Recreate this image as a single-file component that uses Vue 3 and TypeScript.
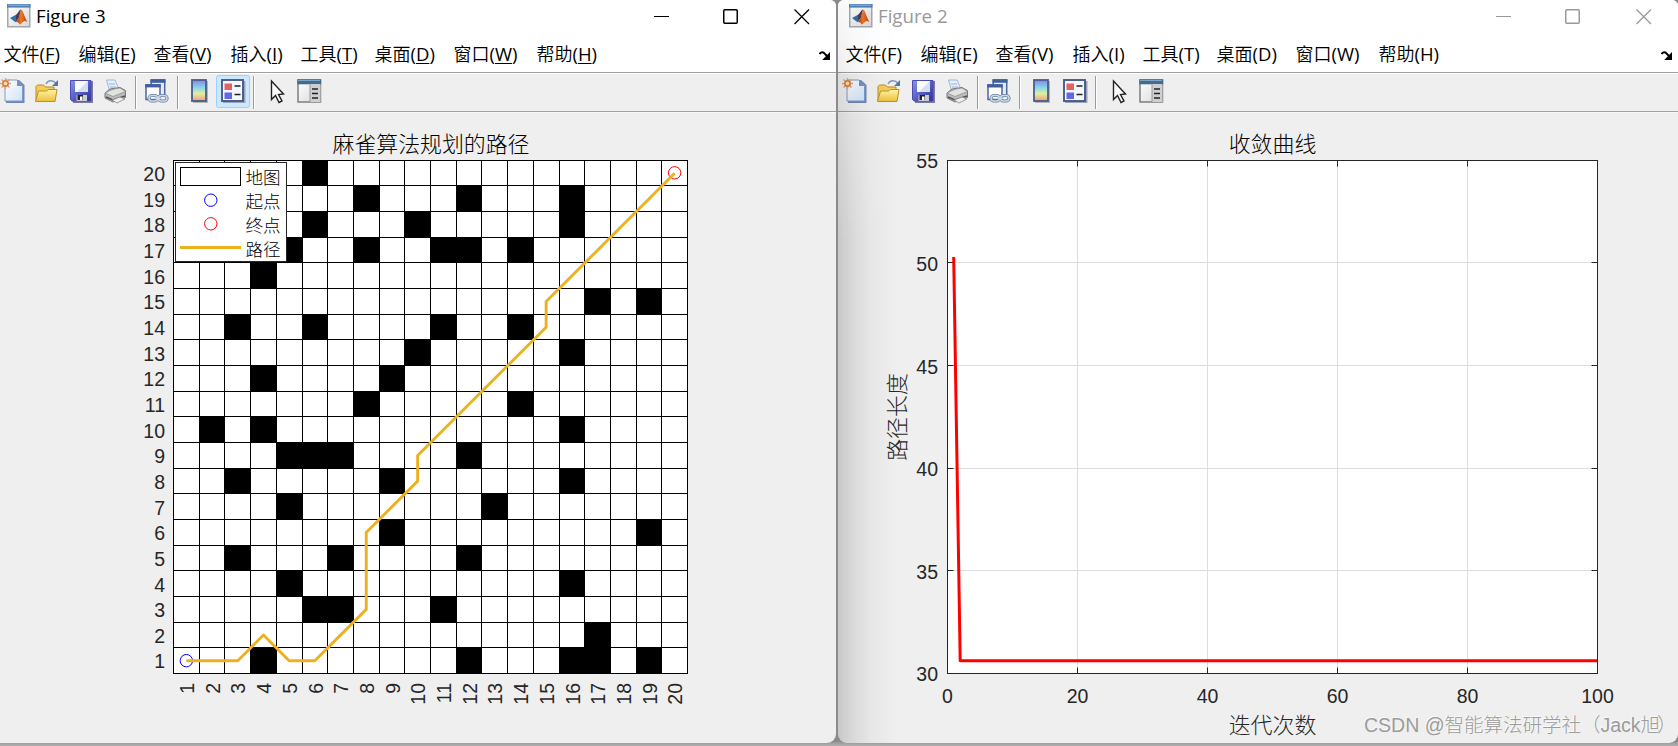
<script setup lang="ts">
interface FigureWindow {
  id: number
  title: string
  active: boolean
}
interface MenuEntry {
  label: string
  key: string
  width: number
}

const windows: FigureWindow[] = [
  { id: 3, title: 'Figure 3', active: true },
  { id: 2, title: 'Figure 2', active: false },
]

const menus: MenuEntry[] = [
  { label: '文件', key: 'F', width: 75 },
  { label: '编辑', key: 'E', width: 75 },
  { label: '查看', key: 'V', width: 77 },
  { label: '插入', key: 'I', width: 70 },
  { label: '工具', key: 'T', width: 74 },
  { label: '桌面', key: 'D', width: 79 },
  { label: '窗口', key: 'W', width: 83 },
  { label: '帮助', key: 'H', width: 70 },
]

const obstacles: Record<number, number[]> = {
  20: [6],
  19: [8, 12, 16],
  18: [6, 10, 16],
  17: [5, 8, 11, 12, 14],
  16: [4],
  15: [17, 19],
  14: [3, 6, 11, 14],
  13: [10, 16],
  12: [4, 9],
  11: [8, 14],
  10: [2, 4, 16],
  9: [5, 6, 7, 12],
  8: [3, 9, 16],
  7: [5, 13],
  6: [9, 19],
  5: [3, 7, 12],
  4: [5, 16],
  3: [6, 7, 11],
  2: [17],
  1: [4, 12, 16, 17, 19],
}

const edgeX = (i: number): number => Math.round(173 + i * 25.7) + 0.5
const edgeY = (i: number): number => Math.floor(673.3 - i * 25.65) + 0.5
const midX = (v: number): number => 173.5 + (v - 0.5) * 25.7
const midY = (v: number): number => 673.5 - (v - 0.5) * 25.65

const cells = Object.entries(obstacles).flatMap(([row, cols]) =>
  cols.map((c) => {
    const r = Number(row)
    return { x: edgeX(c - 1), y: edgeY(r), w: edgeX(c) - edgeX(c - 1), h: edgeY(r - 1) - edgeY(r) }
  }),
)
const lines = Array.from({ length: 21 }, (_, i) => i)
const ticks = Array.from({ length: 20 }, (_, i) => i + 1)

const route: [number, number][] = [
  [1, 1], [3, 1], [4, 2], [5, 1], [6, 1], [8, 3], [8, 6], [10, 8], [10, 9], [15, 14], [15, 15], [20, 20],
]
const routePoints = route.map(([x, y]) => `${midX(x)},${midY(y)}`).join(' ')

const curveX = (v: number): number => 105.5 + v * 6.5
const curveY = (v: number): number => 673.5 - (v - 30) * 20.52
const snap = (v: number): number => Math.floor(v - 0.2) + 0.5
const curve: [number, number][] = [[1, 50.3], [2, 30.62], [100, 30.62]]
const curvePoints = curve.map(([x, y]) => `${curveX(x) - 0.3},${curveY(y)}`).join(' ')
const xTicks = [0, 20, 40, 60, 80, 100]
const yTicks = [30, 35, 40, 45, 50, 55]
</script>

<template>
  <div class="desktop">
    <svg width="0" height="0" class="defs">
      <defs>
        <linearGradient id="jet" x1="0" y1="0" x2="0" y2="1">
          <stop offset="0" stop-color="#8f7fe6" /><stop offset=".35" stop-color="#82d6ee" />
          <stop offset=".65" stop-color="#e2ef9a" /><stop offset="1" stop-color="#f49a83" />
        </linearGradient>
        <linearGradient id="paper" x1="0" y1="0" x2="1" y2="1">
          <stop offset="0" stop-color="#fff" /><stop offset="1" stop-color="#cfe2f7" />
        </linearGradient>
        <linearGradient id="gold" x1="0" y1="0" x2="0" y2="1">
          <stop offset="0" stop-color="#fff5a8" /><stop offset="1" stop-color="#eebf38" />
        </linearGradient>
        <linearGradient id="disk" x1="0" y1="0" x2="1" y2="1">
          <stop offset="0" stop-color="#8296f2" /><stop offset="1" stop-color="#2c2c94" />
        </linearGradient>
        <linearGradient id="flame" x1="0" y1="0" x2="1" y2="0">
          <stop offset="0" stop-color="#a02018" /><stop offset=".45" stop-color="#ef7a20" /><stop offset="1" stop-color="#b83a12" />
        </linearGradient>
        <linearGradient id="pane" x1="0" y1="0" x2="1" y2="1">
          <stop offset="0" stop-color="#fff" /><stop offset="1" stop-color="#d8d8d8" />
        </linearGradient>
      </defs>
    </svg>

    <section v-for="w in windows" :key="w.id" class="window" :class="{ inactive: !w.active }">
      <header class="titlebar">
        <svg class="logo" width="24" height="24" viewBox="0 0 24 24">
          <rect x=".75" y=".75" width="22" height="22" fill="url(#pane)" stroke="#a2a8ae" stroke-width="1.5" />
          <rect x="0" y="0" width="23.5" height="3.6" fill="#4d83b5" /><path d="M1 1.2h21" stroke="#8fb6d8" />
          <path d="M3 14l6-3.200 3 2.200-3.500 5.200z" fill="#2d6fb0" />
          <path d="M9 10.800c2-1 3-5 5-5.300l-2 8-3 4z" fill="#4b3b52" />
          <path d="M8.500 18.200c3-1 3.500-7 6-12.700 2 2 3.500 9 6 12.500-2-.8-3-1.600-4.500 0-1.500 1.600-2.500 2.500-3.500 2.500-1-2.300-2-2.700-4-2.300z" fill="url(#flame)" />
        </svg>
        <span class="caption">{{ w.title }}</span>
        <span class="controls">
          <svg width="156" height="16" viewBox="0 0 156 16" fill="none" stroke="currentColor">
            <path d="M0 7.500h15" />
            <rect x="69.750" y=".750" width="13.500" height="13.500" rx="1" stroke-width="1.500" />
            <path d="M140.500.5l14.500 14.500M155 .5l-14.500 14.500" stroke-width="1.300" />
          </svg>
        </span>
      </header>

      <nav class="menubar">
        <span v-for="m in menus" :key="m.key" class="menu" :style="{ width: m.width + 'px' }"
          >{{ m.label }}<span class="latin">(<span class="key">{{ m.key }}</span>)</span></span
        >
        <svg class="dock" width="12" height="10" viewBox="0 0 12 10">
          <path d="M.5 3C2.500.3 4.500 1 6 3l2 2" fill="none" stroke="#000" stroke-width="2" />
          <path d="M11 1v8H3.200z" fill="#000" />
        </svg>
      </nav>

      <div class="toolbar">
        <svg width="330" height="38" viewBox="0 74 330 38">
          <!-- new -->
          <path d="M6 80h13l5.500 5v18H6z" fill="#6f87b5" /><path d="M5 80h12l5.500 5.500V101H5z" fill="url(#paper)" stroke="#7e9aca" />
          <path d="M17 80v6h6z" fill="#7690c2" />
          <path d="M1.500 79.500l8 8M9.500 79.500l-8 8M5.500 78v11M0 83.500h11" stroke="#eba070" stroke-width="1.500" />
          <circle cx="5.500" cy="83.500" r="2.700" fill="#ffe0a0" stroke="#d66b35" stroke-width="1.300" />
          <!-- open -->
          <path d="M36 101V86.500l1.500-1.500h6l2 2H54v14z" fill="#f3cf58" stroke="#b98b22" />
          <path d="M35.500 101.500l3-10.500h8l2-1.500H57l-2 12z" fill="url(#gold)" stroke="#bd9024" />
          <path d="M46 84c2-4 7-4.500 10-.5" fill="none" stroke="#7f9cba" stroke-width="1.600" /><path d="M58 80v6h-6z" fill="#54789d" />
          <!-- save -->
          <path d="M72 81h21v22H73z" fill="#7a7aa8" /><path d="M70.500 80.500h20.500v20.500H72l-1.500-1.500z" fill="url(#disk)" stroke="#4a4ab0" />
          <path d="M75 81h13v11H75z" fill="#f8faff" /><path d="M88 81v11H77z" fill="#d3ddf4" />
          <path d="M76.500 95h10.500v6H76.500z" fill="#c9cad6" /><path d="M77.500 95h5.500v5h-5.500z" fill="#222" /><path d="M80 96.500h2.500v3.500H80z" fill="#fff" />
          <!-- print -->
          <path d="M106.500 80h8.500l4 9-9 3z" fill="#e5efff" stroke="#9fb5d6" /><path d="M109 84h6M110 87h6" stroke="#9ab0d0" />
          <path d="M105 93l5-4 10-1.500 5.500 3v7L113 102l-8-4z" fill="#bcbcbc" stroke="#777" />
          <path d="M105 93l8 3.500 12.500-5-5.500-3.500-6 1-4 1.500z" fill="#e2e2de" stroke="#888" stroke-width=".7" />
          <path d="M106 97l7 3 12-4" fill="none" stroke="#555" stroke-width="1.400" /><path d="M112 100l8-3 5 2-8 4z" fill="#eee" stroke="#888" stroke-width=".8" />
          <!-- separators -->
          <path d="M135.500 76v33M177.500 76v33M253.500 76v33" stroke="#9a9a9a" />
          <path d="M136.500 76v33M178.500 76v33M254.500 76v33" stroke="#fff" />
          <!-- link plot -->
          <rect x="151.200" y="80" width="13.500" height="15" fill="#e4ecf8" stroke="#4a659f" stroke-width="1.500" />
          <path d="M150.500 79.200H165.500v3.600H150.500z" fill="#3f5f9f" />
          <rect x="146" y="85" width="14" height="14.500" fill="#fff" stroke="#4a659f" stroke-width="1.500" />
          <path d="M145.200 84.200h15.500v3.200h-15.500z" fill="#3f5f9f" />
          <g fill="none" stroke="#677f9e" stroke-width="3.200"><rect x="149" y="95.500" width="8.500" height="5.500" rx="2.750" /><rect x="158.500" y="95.500" width="8.500" height="5.500" rx="2.750" /></g>
          <g fill="none" stroke="#cbdaea" stroke-width="1.500"><rect x="149" y="95.500" width="8.500" height="5.500" rx="2.750" /><rect x="158.500" y="95.500" width="8.500" height="5.500" rx="2.750" /><path d="M154.500 98.300h7.500" /></g>
          <!-- colour bar -->
          <path d="M193 81h15v22h-15z" fill="#b5b5b5" /><rect x="192" y="80" width="14" height="21" fill="url(#jet)" stroke="#485d8c" stroke-width="1.800" />
          <!-- legend toggle -->
          <rect v-if="w.active" x="216.500" y="75.500" width="33" height="32" rx="2" fill="#cce8ff" stroke="#99d1ff" />
          <path d="M223 81h22.500v22H223z" fill="#9aa5b8" /><rect x="222" y="80" width="21" height="21" fill="#f3f7ff" stroke="#465b88" stroke-width="1.900" />
          <path d="M224.500 83.500h7.500v6.500h-7.500z" fill="#e46263" /><path d="M224.500 92.500h7.500V99h-7.500z" fill="#6765e3" />
          <path d="M234.500 86h6M234.500 94.500h6" stroke="#222" stroke-width="1.500" />
          <!-- pointer -->
          <path d="M271.500 81v18.500l4-4 3.500 7 3-1.500-3.500-6.500 5-.5z" fill="#fff" stroke="#222" stroke-width="1.400" />
          <!-- property inspector -->
          <rect x="298" y="80" width="22.500" height="22" fill="url(#pane)" stroke="#777" stroke-width="1.400" />
          <path d="M297.300 79.300h23.900v5h-23.900z" fill="#426c94" /><path d="M298 80.500h22" stroke="#7fa5c5" />
          <path d="M310 84.300h10.500V102H310z" fill="#cfcfcf" /><path d="M310 84.500V102" stroke="#999" />
          <path d="M312 89h6M312 93.500h6M312 98h6" stroke="#222" stroke-width="1.500" />
        </svg>
      </div>

      <!-- path planning map -->
      <svg v-if="w.id === 3" class="figure" width="836" height="630" viewBox="0 113 836 630">
        <text class="cjk black" x="431" y="151.500" text-anchor="middle" font-size="21.900">麻雀算法规划的路径</text>
        <rect x="173.500" y="160.500" width="514" height="513" fill="#fff" />
        <g shape-rendering="crispEdges">
          <rect v-for="(c, i) in cells" :key="i" :x="c.x" :y="c.y" :width="c.w" :height="c.h" fill="#000" />
          <g stroke="#000">
            <line v-for="i in lines" :key="'v' + i" :x1="edgeX(i)" :x2="edgeX(i)" y1="160" y2="674" />
            <line v-for="i in lines" :key="'h' + i" x1="173" x2="688" :y1="edgeY(i)" :y2="edgeY(i)" />
          </g>
        </g>
        <g class="tick">
          <text v-for="t in ticks" :key="'y' + t" x="165" :y="midY(t) + 7.800" text-anchor="end">{{ t }}</text>
          <text v-for="t in ticks" :key="'x' + t" text-anchor="end" :transform="`translate(${midX(t) + 7.700} 683) rotate(-90)`">{{ t }}</text>
        </g>
        <circle :cx="midX(1)" :cy="midY(1)" r="6.200" fill="none" stroke="#00f" />
        <circle :cx="midX(20)" :cy="midY(20) - 0.500" r="6.200" fill="none" stroke="#f00" />
        <polyline :points="routePoints" fill="none" stroke="#edb120" stroke-width="2.900" stroke-linejoin="round" />
        <rect x="175.500" y="162.500" width="111" height="99" fill="#fff" stroke="#262626" />
        <rect x="180.500" y="167.500" width="60" height="18" fill="#fff" stroke="#000" />
        <circle cx="210.800" cy="200.200" r="6.200" fill="none" stroke="#00f" />
        <circle cx="210.800" cy="223.800" r="6.200" fill="none" stroke="#f00" />
        <path d="M180 247.500h61" stroke="#edb120" stroke-width="3" />
        <g class="cjk black" font-size="17.600">
          <text x="245.500" y="184">地图</text><text x="245.500" y="208">起点</text>
          <text x="245.500" y="232">终点</text><text x="245.500" y="256">路径</text>
        </g>
      </svg>

      <!-- convergence curve -->
      <svg v-else class="figure" width="836" height="630" viewBox="0 113 836 630">
        <text class="cjk black" x="430.500" y="151.500" text-anchor="middle" font-size="21.900">收敛曲线</text>
        <rect x="105.500" y="160.500" width="650" height="513" fill="#fff" />
        <g stroke="#dedede">
          <line v-for="t in xTicks.slice(1, 5)" :key="'v' + t" :x1="curveX(t)" :x2="curveX(t)" y1="161" y2="673" />
          <line v-for="t in yTicks.slice(1, 5)" :key="'h' + t" x1="106" x2="755" :y1="snap(curveY(t))" :y2="snap(curveY(t))" />
        </g>
        <g stroke="#262626" fill="none">
          <rect x="105.500" y="160.500" width="650" height="513" />
          <path v-for="t in xTicks.slice(1, 5)" :key="'a' + t" :d="`M${curveX(t)} 161v5.500M${curveX(t)} 673v-5.500`" />
          <path v-for="t in yTicks.slice(1, 5)" :key="'b' + t" :d="`M106 ${snap(curveY(t))}h5.500M755 ${snap(curveY(t))}h-5.500`" />
        </g>
        <polyline :points="curvePoints" fill="none" stroke="#f00" stroke-width="3" stroke-linejoin="round" />
        <g class="tick">
          <text v-for="t in yTicks" :key="'y' + t" x="96" :y="curveY(t) + 7.800" text-anchor="end">{{ t }}</text>
          <text v-for="t in xTicks" :key="'x' + t" :x="curveX(t)" y="703" text-anchor="middle">{{ t }}</text>
        </g>
        <text class="cjk" x="430.500" y="733" text-anchor="middle" font-size="21.900">迭代次数</text>
        <text class="cjk" text-anchor="middle" font-size="21.900" transform="translate(62.800 417) rotate(-90)">路径长度</text>
      </svg>
    </section>
    <div class="watermark">CSDN @智能算法研学社<span class="paren">（</span>Jack旭<span class="paren">）</span></div>
  </div>
</template>

<style>
html,
body {
  margin: 0;
  overflow: hidden;
}
</style>

<style scoped>
.desktop {
  position: relative;
  display: flex;
  gap: 2px;
  width: 1678px;
  height: 746px;
  overflow: hidden;
  background: linear-gradient(#8b8b8b 742px, #979797 742px, #b0b0b0 746px);
}
.defs {
  position: absolute;
}
.window {
  position: relative;
  display: flex;
  flex-direction: column;
  flex: none;
  box-sizing: border-box;
  width: 836px;
  height: 743px;
  overflow: hidden;
  background: #efefef;
  border-radius: 0 6px 9px 0;
}
.window.inactive {
  width: 840px;
  padding-left: 4px;
  border-radius: 6px 6px 9px 9px;
  background: linear-gradient(#fff 72px, #a0a0a0 72px, #a0a0a0 73px, #fff 73px, #efefef 74px, #efefef 111px, #a0a0a0 111px, #a0a0a0 112px, #fafafa 112px, #efefef 113px);
}
/* soft shadow cast by the neighbouring window */
.window.inactive::after {
  content: '';
  position: absolute;
  left: 0;
  top: 0;
  width: 60px;
  height: 100%;
  pointer-events: none;
  background: linear-gradient(90deg, rgba(0, 0, 0, 0.16), rgba(0, 0, 0, 0.09) 25%, rgba(0, 0, 0, 0.03) 55%, transparent);
  mask-image: linear-gradient(rgba(0, 0, 0, 0.15), rgba(0, 0, 0, 0.6) 110px, #000 240px);
}
.titlebar {
  display: flex;
  flex: none;
  align-items: center;
  height: 34px;
  padding: 0 26px 0 7px;
  background: #fff;
  color: #000;
}
.inactive .titlebar,
.inactive .menubar {
  margin-left: -4px;
}
.inactive .titlebar {
  padding-left: 11px;
  color: #999;
}
.logo {
  margin-top: -2px;
}
.caption {
  margin-left: 5px;
  margin-top: -2px;
  font: 18.7px/34px 'Open Sans', sans-serif;
  white-space: nowrap;
}
.controls {
  display: flex;
  margin-left: auto;
  margin-top: -1px;
}
.menubar {
  display: flex;
  flex: none;
  align-items: center;
  height: 38px;
  padding-left: 3.5px;
  background: #fff;
}
.inactive .menubar {
  padding-left: 7.5px;
}
.menu {
  flex: none;
  padding-top: 1px;
  font: 18px/38px 'Noto Sans CJK SC', sans-serif;
  font-weight: 350;
  white-space: nowrap;
}
.latin {
  font-family: 'Open Sans', sans-serif;
  font-size: 18.5px;
  font-weight: 400;
}
.window:not(.inactive) .key {
  text-decoration: underline;
  text-underline-offset: 2px;
  text-decoration-thickness: 1px;
}
.dock {
  margin-left: auto;
  margin-right: 5px;
  margin-top: 6px;
}
.toolbar {
  flex: none;
  box-sizing: border-box;
  height: 41px;
  border-top: 1px solid #a0a0a0;
  border-bottom: 1px solid #fafafa;
  background: linear-gradient(#fff 1px, #efefef 1px 38px, #a0a0a0 38px);
}
.toolbar svg {
  display: block;
  margin-top: 1px;
}
.figure {
  display: block;
  flex: none;
}
.tick {
  font-family: 'Liberation Sans', Arial, sans-serif;
  font-size: 19.5px;
  fill: #262626;
}
.cjk {
  font-family: 'Noto Sans CJK SC', sans-serif;
  font-weight: 300;
  fill: #262626;
}
.cjk.black {
  fill: #000;
}
.watermark {
  position: absolute;
  left: 1364px;
  top: 710px;
  font: 19.5px/30px 'Liberation Sans', 'Noto Sans CJK SC', sans-serif;
  font-weight: 300;
  color: #9b9b9b;
  text-shadow: -1px -1px 0 #fafafa;
  white-space: nowrap;
}
.paren:last-child {
  margin-left: -3px;
}
</style>
